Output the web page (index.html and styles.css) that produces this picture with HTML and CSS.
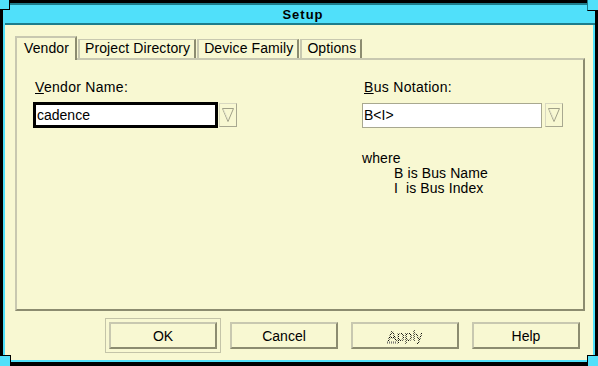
FILE: index.html
```html
<!DOCTYPE html>
<html>
<head>
<meta charset="utf-8">
<title>Setup</title>
<link rel="stylesheet" href="styles.css">
</head>
<body>
<div class="window">
  <div class="frame">
    <div class="titlebar"><span class="title">Setup</span></div>
    <div class="client">
      <div class="tabs">
        <div class="tab active">Vendor</div>
        <div class="tab">Project Directory</div>
        <div class="tab">Device Family</div>
        <div class="tab">Options</div>
      </div>
      <div class="panel">
        <div class="col">
          <div class="label"><u>V</u>endor Name:</div>
          <div class="combo">
            <div class="field focus">cadence</div>
            <div class="drop"><svg width="18" height="24" viewBox="0 0 18 24"><polygon points="3.5,5.5 14.5,5.5 9,18.5" fill="none" stroke="#a0a088" stroke-width="1"/><polyline points="4.5,6.5 9,16.5" fill="none" stroke="#e4e4cc" stroke-width="1"/></svg></div>
          </div>
        </div>
        <div class="col">
          <div class="label"><u>B</u>us Notation:</div>
          <div class="combo">
            <div class="field plain">B&lt;I&gt;</div>
            <div class="drop gap"><svg width="18" height="24" viewBox="0 0 18 24"><polygon points="3.5,5.5 14.5,5.5 9,18.5" fill="none" stroke="#a0a088" stroke-width="1"/><polyline points="4.5,6.5 9,16.5" fill="none" stroke="#e4e4cc" stroke-width="1"/></svg></div>
          </div>
          <div class="where">where</div>
          <div class="where indent">B is Bus Name</div>
          <div class="where indent">I  is Bus Index</div>
        </div>
      </div>
      <div class="buttons">
        <div class="btn default">OK</div>
        <div class="btn">Cancel</div>
        <div class="btn disabled"><span class="stipple"><u>A</u>pply</span></div>
        <div class="btn">Help</div>
      </div>
    </div>
  </div>
  <div class="corner tl"></div>
  <div class="corner tr"></div>
  <div class="corner bl"></div>
  <div class="corner br"></div>
</div>
</body>
</html>
```
FILE: styles.css
```css
* { box-sizing: border-box; }
html, body { margin: 0; padding: 0; }
body {
  background: #000;
  width: 598px;
  height: 366px;
  overflow: hidden;
  font-family: "Liberation Sans", Arial, sans-serif;
  font-size: 14px;
  color: #000;
}
.window {
  position: relative;
  width: 598px;
  height: 366px;
  padding: 3px 3px 4px 3px;
}
.frame {
  height: 100%;
  background: #50e0fa;
  padding: 0 2px 2px 2px;
  display: flex;
  flex-direction: column;
}
.titlebar {
  height: 22px;
  flex: none;
  border-top: 2px solid #1d7d8c;
  border-bottom: 2px solid #1d7d8c;
  margin: 0 -2px 0 0;
  display: flex;
  align-items: center;
  justify-content: center;
}
.title {
  font-weight: bold;
  font-size: 13px;
  letter-spacing: 1px;
  padding-left: 6px;
}
.client {
  flex: 1;
  background: #f8f8d2;
  display: flex;
  flex-direction: column;
}
.tabs {
  display: flex;
  align-items: flex-end;
  height: 22px;
  margin: 11px 0 0 10px;
}
.tab {
  height: 19px;
  line-height: 17px;
  padding: 0 4px 0 5px;
  border-top: 1px solid #c8c8b0;
  border-left: 2px solid #c8c8b0;
  border-right: 2px solid #8c8c70;
  margin-right: 1px;
  white-space: nowrap;
  letter-spacing: 0.1px;
}
.tab.active {
  height: 24px;
  line-height: 20px;
  padding: 0 6px 0 7px;
  margin-bottom: -2px;
  background: #f8f8d2;
  position: relative;
  z-index: 1;
  border-top: 2px solid #c8c8b0;
}
.panel {
  height: 253px;
  margin: 0 8px 0 10px;
  border-style: solid;
  border-width: 2px;
  border-color: #c8c8b0 #8c8c70 #8c8c70 #c8c8b0;
  display: grid;
  grid-template-columns: 329px 1fr;
  padding: 19px 0 0 16px;
}
.label {
  line-height: 16px;
  padding-left: 2px;
  margin-bottom: 7px;
  letter-spacing: 0.3px;
}
.combo {
  display: flex;
  align-items: center;
  height: 26px;
}
.field {
  height: 26px;
  background: #fff;
  line-height: 20px;
  white-space: nowrap;
}
.field.focus {
  width: 185px;
  border: 3px solid #000;
  padding-left: 1px;
}
.field.plain {
  width: 180px;
  height: 25px;
  border: 1px solid #a8a890;
  padding-left: 1px;
  line-height: 22px;
}
.drop {
  width: 18px;
  height: 24px;
  margin-left: 1px;
  border-style: solid;
  border-width: 1px;
  border-color: #d8d8c0 #a8a890 #a8a890 #d8d8c0;
  display: flex;
}
.drop svg { margin: -1px; }
.drop.gap { margin-left: 3px; }
.where {
  line-height: 15px;
  white-space: pre;
  letter-spacing: 0.1px;
}
.combo + .where { margin-top: 23px; }
.indent { padding-left: 32px; }
.buttons {
  display: flex;
  gap: 13px;
  padding-left: 104px;
  margin-top: 11px;
}
.btn {
  width: 108px;
  height: 27px;
  border-style: solid;
  border-width: 2px;
  border-color: #c8c8b0 #8c8c70 #8c8c70 #c8c8b0;
  display: flex;
  align-items: center;
  justify-content: center;
}
.btn.default {
  outline: 1px solid #c4c4a8;
  outline-offset: 3px;
}
.stipple {
  color: transparent;
  background: repeating-conic-gradient(#000 0 25%, transparent 0 50%) 0 0 / 2px 2px;
  -webkit-background-clip: text;
  background-clip: text;
}
.stipple u { text-decoration-color: #777; text-decoration-style: dotted; }
.corner {
  position: absolute;
  width: 11px;
  height: 11px;
  background: #50e0fa;
}
.corner.tl { left: 0; top: 0; border-right: 1px solid #000; border-bottom: 1px solid #000; width: 10px; height: 10px; }
.corner.tr { right: 0; top: 0; border-left: 1px solid #1d7d8c; border-bottom: 1px solid #000; }
.corner.bl { left: 0; bottom: 0; border-top: 1px solid #000; border-right: 1px solid #000; }
.corner.br { right: 0; bottom: 0; border-top: 1px solid #000; border-left: 1px solid #000; }
```
